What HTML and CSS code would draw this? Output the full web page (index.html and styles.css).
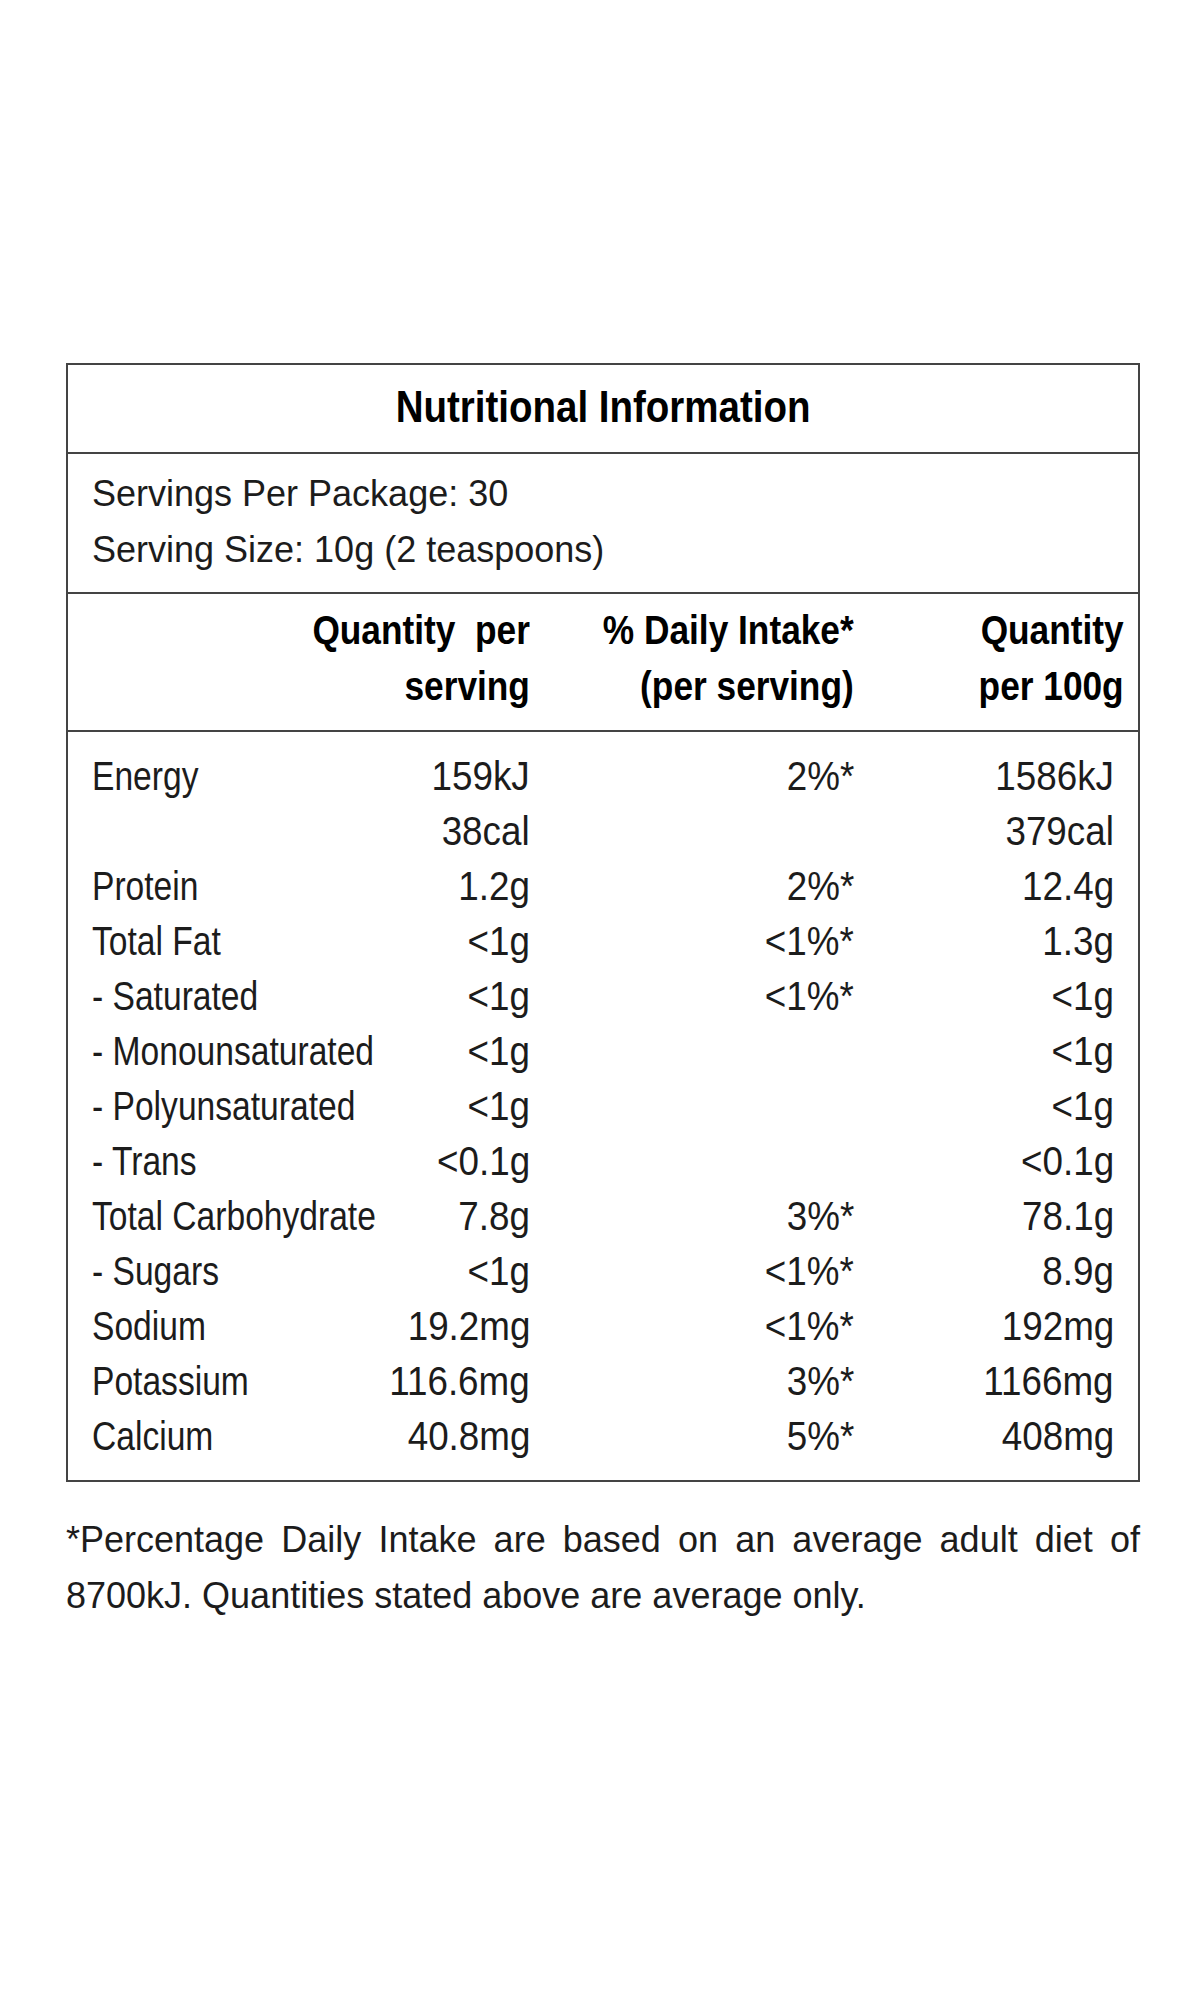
FILE: index.html
```html
<!DOCTYPE html>
<html lang="en">
<head>
<meta charset="utf-8">
<title>Nutritional Information</title>
<link rel="stylesheet" href="styles.css">
</head>
<body>
<div class="page">
  <div class="panel">
    <div class="title"><span class="t">Nutritional Information</span></div>
    <div class="servings">
      <div>Servings Per Package: 30</div>
      <div>Serving Size: 10g (2 teaspoons)</div>
    </div>
    <div class="grid colhead">
      <div></div>
      <div class="num"><span class="t">Quantity&nbsp; per<br>serving</span></div>
      <div class="num"><span class="t">% Daily Intake*<br>(per serving)</span></div>
      <div class="num"><span class="t">Quantity<br>per 100g</span></div>
    </div>
    <div class="grid rows">
      <div class="lab"><span class="t">Energy</span></div><div class="num"><span class="t">159kJ</span></div><div class="num"><span class="t">2%*</span></div><div class="num"><span class="t">1586kJ</span></div>
      <div class="lab"></div><div class="num"><span class="t">38cal</span></div><div class="num"></div><div class="num"><span class="t">379cal</span></div>
      <div class="lab"><span class="t">Protein</span></div><div class="num"><span class="t">1.2g</span></div><div class="num"><span class="t">2%*</span></div><div class="num"><span class="t">12.4g</span></div>
      <div class="lab"><span class="t">Total Fat</span></div><div class="num"><span class="t">&lt;1g</span></div><div class="num"><span class="t">&lt;1%*</span></div><div class="num"><span class="t">1.3g</span></div>
      <div class="lab"><span class="t">- Saturated</span></div><div class="num"><span class="t">&lt;1g</span></div><div class="num"><span class="t">&lt;1%*</span></div><div class="num"><span class="t">&lt;1g</span></div>
      <div class="lab"><span class="t">- Monounsaturated</span></div><div class="num"><span class="t">&lt;1g</span></div><div class="num"></div><div class="num"><span class="t">&lt;1g</span></div>
      <div class="lab"><span class="t">- Polyunsaturated</span></div><div class="num"><span class="t">&lt;1g</span></div><div class="num"></div><div class="num"><span class="t">&lt;1g</span></div>
      <div class="lab"><span class="t">- Trans</span></div><div class="num"><span class="t">&lt;0.1g</span></div><div class="num"></div><div class="num"><span class="t">&lt;0.1g</span></div>
      <div class="lab"><span class="t">Total Carbohydrate</span></div><div class="num"><span class="t">7.8g</span></div><div class="num"><span class="t">3%*</span></div><div class="num"><span class="t">78.1g</span></div>
      <div class="lab"><span class="t">- Sugars</span></div><div class="num"><span class="t">&lt;1g</span></div><div class="num"><span class="t">&lt;1%*</span></div><div class="num"><span class="t">8.9g</span></div>
      <div class="lab"><span class="t">Sodium</span></div><div class="num"><span class="t">19.2mg</span></div><div class="num"><span class="t">&lt;1%*</span></div><div class="num"><span class="t">192mg</span></div>
      <div class="lab"><span class="t">Potassium</span></div><div class="num"><span class="t">116.6mg</span></div><div class="num"><span class="t">3%*</span></div><div class="num"><span class="t">1166mg</span></div>
      <div class="lab"><span class="t">Calcium</span></div><div class="num"><span class="t">40.8mg</span></div><div class="num"><span class="t">5%*</span></div><div class="num"><span class="t">408mg</span></div>
    </div>
  </div>
  <div class="foot">
    <div class="foot-just">*Percentage Daily Intake are based on an average adult diet of</div>
    <div>8700kJ. Quantities stated above are average only.</div>
  </div>
</div>
</body>
</html>
```
FILE: styles.css
```css
html, body {
  margin: 0;
  padding: 0;
  background: #ffffff;
}

body {
  color: #1c1c1c;
  font-family: "Liberation Sans", Arial, sans-serif;
}

.page {
  padding: 363px 0 0 66px;
}

.panel {
  width: 1074px;
  box-sizing: border-box;
  border: 2px solid #444444;
}

.t {
  display: inline-block;
  white-space: nowrap;
}

.title {
  display: flex;
  justify-content: center;
  font-weight: 700;
  font-size: 44px;
  line-height: 52px;
  padding: 16px 0 19px;
  border-bottom: 2px solid #444444;
  color: #000000;
}

.title .t {
  transform: scaleX(0.875);
  transform-origin: 50% 50%;
}

.servings {
  font-size: 36px;
  line-height: 56px;
  padding: 12px 24px 14px;
  border-bottom: 2px solid #444444;
}

.grid {
  display: grid;
  grid-template-columns: 228px 210px 324px 1fr;
  padding-left: 24px;
}

.num {
  display: flex;
  justify-content: flex-end;
  text-align: right;
}

.num .t {
  transform-origin: 100% 50%;
}

.lab .t {
  transform-origin: 0 50%;
}

.colhead {
  font-weight: 700;
  font-size: 41px;
  line-height: 56px;
  padding-top: 8px;
  padding-bottom: 16px;
  padding-right: 14px;
  border-bottom: 2px solid #444444;
  color: #000000;
}

.colhead .t {
  transform: scaleX(0.86);
}

.rows {
  font-size: 40px;
  line-height: 55px;
  padding-top: 17px;
  padding-bottom: 16px;
  padding-right: 24px;
}

.rows .lab .t {
  transform: scaleX(0.84);
}

.rows .num .t {
  transform: scaleX(0.92);
}

.foot {
  width: 1074px;
  margin-top: 30px;
  font-size: 36px;
  line-height: 56px;
}

.foot-just {
  text-align: justify;
  text-align-last: justify;
}
```
